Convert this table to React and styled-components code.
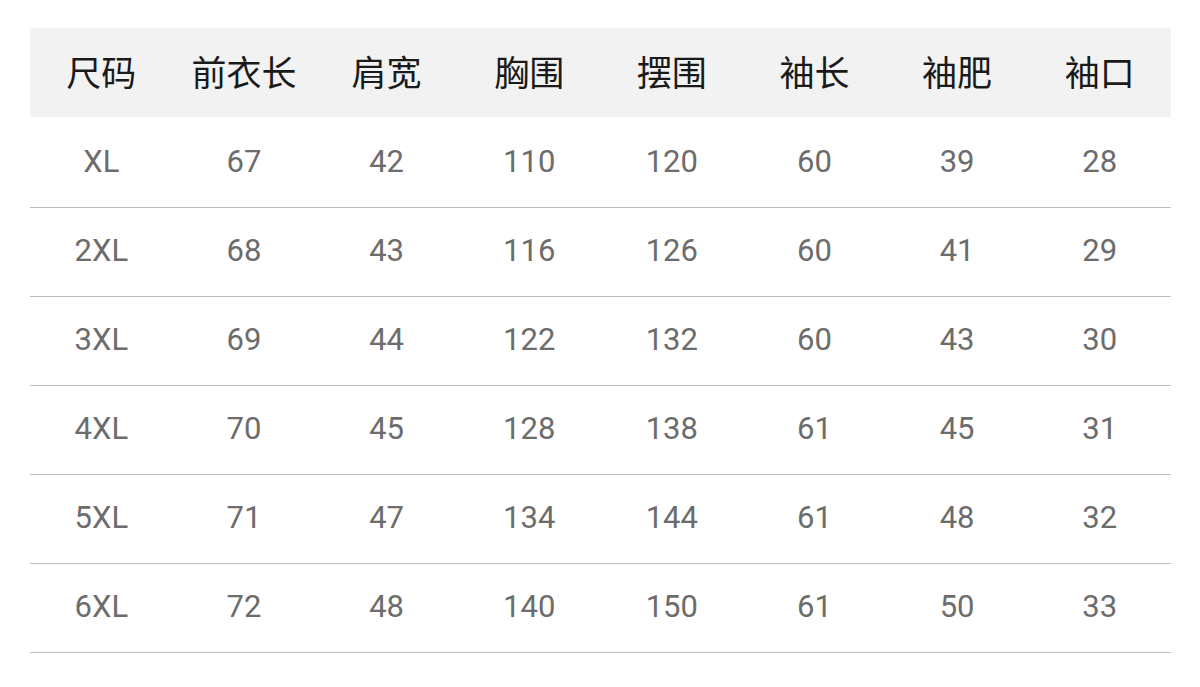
import React from "react";
import styled, { createGlobalStyle } from "styled-components";

const headers = ["尺码", "前衣长", "肩宽", "胸围", "摆围", "袖长", "袖肥", "袖口"];

const rows = [
    ["XL", 67, 42, 110, 120, 60, 39, 28],
    ["2XL", 68, 43, 116, 126, 60, 41, 29],
    ["3XL", 69, 44, 122, 132, 60, 43, 30],
    ["4XL", 70, 45, 128, 138, 61, 45, 31],
    ["5XL", 71, 47, 134, 144, 61, 48, 32],
    ["6XL", 72, 48, 140, 150, 61, 50, 33],
];

const GlobalStyle = createGlobalStyle`
    html, body {
        margin: 0;
        padding: 0;
        background: #ffffff;
    }
`;

const Page = styled.div`
    width: 1200px;
    height: 687px;
    padding: 28px 29px 0 30px;
    box-sizing: border-box;
    background: #ffffff;
`;

const Table = styled.div`
    display: flex;
    flex-direction: column;
`;

const HeaderRow = styled.div`
    display: grid;
    grid-template-columns: repeat(8, 1fr);
    height: 89px;
    margin-bottom: 2px;
    align-items: center;
    background: #f2f2f2;
`;

const HeadCell = styled.div`
    text-align: center;
    font-family: "Noto Sans CJK SC", "Noto Sans", sans-serif;
    font-size: 35px;
    font-weight: 400;
    color: #1a1a1a;
    line-height: 1;
    padding-bottom: 4px;
`;

const Row = styled.div`
    display: grid;
    grid-template-columns: repeat(8, 1fr);
    height: 88px;
    align-items: center;
    border-bottom: 1px solid #bdbdbd;
`;

const Cell = styled.div`
    text-align: center;
    font-family: Roboto, "Noto Sans", sans-serif;
    font-size: 31px;
    color: #6c6c6c;
    line-height: 1;
    padding-bottom: 4px;
`;

export default function App() {
    return (
        <>
            <GlobalStyle />
            <Page>
                <Table>
                    <HeaderRow>
                        {headers.map((h) => (
                            <HeadCell key={h}>{h}</HeadCell>
                        ))}
                    </HeaderRow>
                    {rows.map((r) => (
                        <Row key={r[0]}>
                            {r.map((v, i) => (
                                <Cell key={i}>{v}</Cell>
                            ))}
                        </Row>
                    ))}
                </Table>
            </Page>
        </>
    );
}
